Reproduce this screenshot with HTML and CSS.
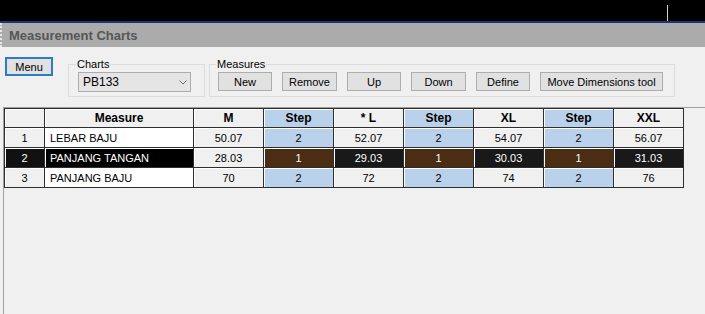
FILE: index.html
```html
<!DOCTYPE html>
<html lang="en">
<head>
    <meta charset="UTF-8">
    <meta name="viewport" content="width=device-width, initial-scale=1.0">
    <title>Measurement Charts</title>
    <link rel="stylesheet" href="styles.css">
</head>
<body>
    <div class="topbar"><span class="caret"></span></div>
    <div class="titlebar">Measurement Charts</div>

    <div class="toolbar">
        <button class="btn btn-menu">Menu</button>

        <fieldset class="group group-charts">
            <legend>Charts</legend>
            <div class="combo">
                <span>PB133</span>
                <svg width="8" height="5" viewBox="0 0 8 5"><polyline points="0.5,0.5 4,4 7.5,0.5" fill="none" stroke="#6d6d6d" stroke-width="1"/></svg>
            </div>
        </fieldset>

        <fieldset class="group group-measures">
            <legend>Measures</legend>
            <div class="buttons">
                <button class="btn w54">New</button>
                <button class="btn w55">Remove</button>
                <button class="btn w54">Up</button>
                <button class="btn w55">Down</button>
                <button class="btn w54">Define</button>
                <button class="btn w123">Move Dimensions tool</button>
            </div>
        </fieldset>
    </div>

    <div class="grid-area">
        <table class="grid">
            <thead>
                <tr>
                    <th class="c-hdr"></th>
                    <th class="c-name">Measure</th>
                    <th>M</th>
                    <th class="step">Step</th>
                    <th>* L</th>
                    <th class="step">Step</th>
                    <th>XL</th>
                    <th class="step">Step</th>
                    <th>XXL</th>
                </tr>
            </thead>
            <tbody>
                <tr>
                    <td class="hdr">1</td>
                    <td class="name">LEBAR BAJU</td>
                    <td class="base">50.07</td>
                    <td class="step">2</td>
                    <td class="val">52.07</td>
                    <td class="step">2</td>
                    <td class="val">54.07</td>
                    <td class="step">2</td>
                    <td class="val">56.07</td>
                </tr>
                <tr class="sel">
                    <td class="hdr">2</td>
                    <td class="name">PANJANG TANGAN</td>
                    <td class="base">28.03</td>
                    <td class="step">1</td>
                    <td class="val">29.03</td>
                    <td class="step">1</td>
                    <td class="val">30.03</td>
                    <td class="step">1</td>
                    <td class="val">31.03</td>
                </tr>
                <tr>
                    <td class="hdr">3</td>
                    <td class="name">PANJANG BAJU</td>
                    <td class="base">70</td>
                    <td class="step">2</td>
                    <td class="val">72</td>
                    <td class="step">2</td>
                    <td class="val">74</td>
                    <td class="step">2</td>
                    <td class="val">76</td>
                </tr>
            </tbody>
        </table>
    </div>
</body>
</html>
```

FILE: styles.css
```css
html, body {
    margin: 0;
    padding: 0;
    height: 100%;
}
body {
    background-color: #f0f0f0;
    font-family: "Liberation Sans", Arial, sans-serif;
    font-size: 11px;
    color: #000;
    display: flex;
    flex-direction: column;
    overflow: hidden;
}
.topbar {
    height: 23px;
    box-sizing: border-box;
    background-color: #000;
    border-bottom: 2px solid #1c3672;
    padding: 5px 0 0 667px;
    display: flex;
}
.caret {
    width: 1px;
    height: 16px;
    background-color: #d9d9a6;
}
.titlebar {
    height: 24px;
    line-height: 25px;
    background-color: #ababab;
    color: #565656;
    font-size: 13px;
    font-weight: bold;
    padding-left: 7px;
    border-left: 2px dotted #e8e8e8;
}
.toolbar {
    display: flex;
    align-items: flex-start;
    padding: 10px 0 0 5px;
}
.btn {
    height: 19px;
    box-sizing: border-box;
    padding: 0;
    font-family: inherit;
    font-size: 11px;
    color: #000;
    background-color: #e1e1e1;
    border: 1px solid #adadad;
}
.btn-menu {
    width: 48px;
    border: 2px solid #2e7cc6;
}
.group {
    margin: 0;
    border: 1px solid #dcdcdc;
    min-width: 0;
}
.group legend {
    padding: 0 1px;
    margin-left: -2px;
    font-size: 11px;
    line-height: 14px;
}
.group-charts {
    margin-left: 15px;
    padding: 1px 13px 4px 9px;
}
.group-measures {
    margin-left: 4px;
    padding: 1px 11px 5px 8px;
}
.combo {
    width: 113px;
    height: 20px;
    box-sizing: border-box;
    border: 1px solid #acacac;
    background-color: #e5e5e5;
    display: flex;
    align-items: center;
    justify-content: space-between;
    padding: 0 3px 0 4px;
    font-size: 12px;
}
.buttons {
    display: flex;
    gap: 10px;
}
.w54 { width: 54px; }
.w55 { width: 55px; }
.w123 { width: 123px; }
.grid-area {
    flex: 1;
    margin: 10px 0 0 3px;
    border-top: 1px solid #a0a0a0;
    border-left: 1px solid #a0a0a0;
}
.grid {
    border-collapse: separate;
    border-spacing: 0;
    table-layout: fixed;
    width: 680px;
    border-top: 1px solid #2e2e2e;
    border-left: 1px solid #2e2e2e;
}
.grid th, .grid td {
    box-sizing: border-box;
    width: 70px;
    padding: 0;
    text-align: center;
    border-right: 1px solid #2e2e2e;
    border-bottom: 1px solid #2e2e2e;
    background-color: #f0f0f0;
    box-shadow: inset 1px 1px 0 #ffffff;
    white-space: nowrap;
    overflow: hidden;
}
.grid th {
    height: 19px;
    font-size: 12px;
    font-weight: bold;
}
.grid td {
    height: 20px;
    font-size: 11px;
}
.grid .c-hdr { width: 40px; }
.grid .c-name { width: 149px; }
.grid .name {
    text-align: left;
    padding-left: 5px;
    background-color: #fff;
}
.grid .step {
    background-color: #b9d1ea;
}
.grid .sel .hdr {
    background-color: #111;
    color: #fff;
}
.grid .sel .name {
    background-color: #000;
    color: #fff;
}
.grid .sel .val {
    background-color: #191919;
    color: #fff;
}
.grid .sel .step {
    background-color: #4a2d13;
    color: #fff;
}
```
